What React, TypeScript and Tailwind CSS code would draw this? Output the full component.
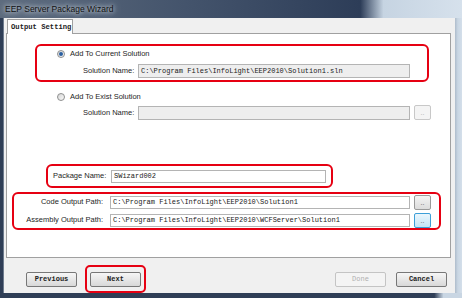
import React from "react";

const sans = "font-['Liberation_Sans',Arial,sans-serif]";
const mono = "font-['Liberation_Mono','Courier_New',monospace]";

const Radio = ({ checked }: { checked?: boolean }) => (
  <span className="w-[8px] h-[8px] rounded-full border border-[#8e8f8f] bg-gradient-to-br from-[#d6d6d6] to-[#fafafa] flex items-center justify-center shrink-0">
    {checked && <span className="w-[4px] h-[4px] rounded-full bg-[#2a5fa0]" />}
  </span>
);

const Field = ({ value, width, height = 14, disabled }: { value?: string; width: number; height?: number; disabled?: boolean }) => (
  <div
    className={`border border-[#b4b4b4] flex items-center pl-[2px] text-[7px] text-[#222] overflow-hidden whitespace-nowrap ${mono} ${
      disabled ? "bg-[#eeeeee]" : "bg-white"
    }`}
    style={{ width, height }}
  >
    {value}
  </div>
);

const Browse = ({ active, dim }: { active?: boolean; dim?: boolean }) => (
  <div
    className={`w-[17px] h-[15px] ml-[4px] rounded-[2px] border flex items-center justify-center text-[7px] leading-none ${sans} ${
      active
        ? "border-[#3c9fd8] bg-gradient-to-b from-[#eaf6fd] to-[#c4e5f6] text-[#555]"
        : dim
        ? "border-[#c8c8c8] bg-[#f4f4f4] text-[#aaa]"
        : "border-[#9a9a9a] bg-gradient-to-b from-[#f4f4f4] to-[#dcdcdc] text-[#555]"
    }`}
  >
    ..
  </div>
);

const Button = ({ label, disabled }: { label: string; disabled?: boolean }) => (
  <div
    className={`w-[51px] h-[15px] rounded-[2px] border flex items-center justify-center text-[7px] font-bold ${mono} ${
      disabled
        ? "border-[#c4c4c4] bg-[#f4f4f4] text-[#b0b0b0] font-normal"
        : "border-[#777] bg-gradient-to-b from-[#f6f6f6] to-[#d8d8d8] text-[#222]"
    }`}
  >
    {label}
  </div>
);

export default function App() {
  return (
    <div className={`w-[462px] h-[298px] flex flex-col overflow-hidden bg-[#c9d6e3] ${sans}`}>
      {/* title bar */}
      <div className="h-[18px] flex items-center pl-[5px] bg-[linear-gradient(90deg,#5d6b7d_0%,#44546c_40%,#2d3d58_78%,#c6d4e2_83%,#d6e1ec_100%)]">
        <span className="text-[8.5px] text-[#111] [text-shadow:0_0_4px_#dfe7f0,0_0_8px_#c8d3df]">
          EEP Server Package Wizard
        </span>
      </div>

      <div className="flex-1 flex">
        {/* left frame */}
        <div className="w-[4px] bg-[linear-gradient(90deg,#2f3e56_0%,#2f3e56_70%,#9aa6b4_100%)]" />

        {/* client area */}
        <div className="flex-1 flex flex-col bg-[#f0f0f0]">
          {/* tab */}
          <div className="h-[15px] flex items-end pl-[3px]">
            <div className={`w-[66px] h-[15px] -mb-[1px] relative z-10 bg-white border border-b-0 border-[#a0a0a0] flex items-center pl-[3px] text-[7.2px] font-bold text-[#222] ${mono}`}>
              Output Setting
            </div>
          </div>

          {/* panel */}
          <div className="ml-[2px] mr-[4px] h-[225px] bg-white border border-[#a0a0a0] flex flex-col">
            {/* current solution box */}
            <div className="mt-[10px] ml-[28px] w-[394px] h-[38px] border-2 border-[#e60012] rounded-[6px] flex flex-col">
              <div className="mt-[2px] h-[12px] pl-[20px] flex items-center gap-[5px] text-[7.5px] text-[#1e1e1e]">
                <Radio checked />
                <span>Add To Current Solution</span>
              </div>
              <div className="mt-[4px] pl-[46px] flex items-center">
                <span className="w-[55px] text-[7.5px] text-[#1e1e1e]">Solution Name:</span>
                <Field value="C:\Program Files\InfoLight\EEP2010\Solution1.sln" width={272} disabled />
              </div>
            </div>

            {/* exist solution */}
            <div className="mt-[9px] h-[12px] pl-[50px] flex items-center gap-[5px] text-[7.5px] text-[#1e1e1e]">
              <Radio />
              <span>Add To Exist Solution</span>
            </div>
            <div className="mt-[2px] h-[15px] pl-[76px] flex items-center">
              <span className="w-[55px] text-[7.5px] text-[#1e1e1e]">Solution Name:</span>
              <Field width={272} disabled />
              <Browse dim />
            </div>

            {/* package box */}
            <div className="mt-[44px] ml-[39px] w-[287px] h-[24px] border-2 border-[#e60012] rounded-[6px] flex items-center pl-[5px]">
              <span className="w-[58px] text-[7.5px] text-[#1e1e1e]">Package Name:</span>
              <Field value="SWizard002" width={215} height={13} />
            </div>

            {/* output paths box */}
            <div className="mt-[4px] ml-[5px] w-[429px] h-[38px] border-2 border-[#e60012] rounded-[6px] flex flex-col justify-center gap-[3px]">
              <div className="h-[15px] flex items-center">
                <span className="w-[89px] text-right text-[7.5px] text-[#1e1e1e]">Code Output Path:</span>
                <span className="w-[7px]" />
                <Field value="C:\Program Files\InfoLight\EEP2010\Solution1" width={300} height={13} />
                <Browse />
              </div>
              <div className="h-[15px] flex items-center">
                <span className="w-[89px] text-right text-[7.5px] text-[#1e1e1e]">Assembly Output Path:</span>
                <span className="w-[7px]" />
                <Field value="C:\Program Files\InfoLight\EEP2010\WCFServer\Solution1" width={300} height={13} />
                <Browse active />
              </div>
            </div>
          </div>

          {/* bottom buttons */}
          <div className="flex-1 flex items-start pt-[7px] pl-[22px] pr-[8px]">
            <div className="h-[28px] flex items-center">
              <Button label="Previous" />
            </div>
            <div className="ml-[8px] w-[61px] h-[28px] border-2 border-[#e60012] rounded-[5px] flex items-center justify-center">
              <Button label="Next" />
            </div>
            <div className="flex-1" />
            <div className="h-[28px] flex items-center gap-[10px]">
              <Button label="Done" disabled />
              <Button label="Cancel" />
            </div>
          </div>
        </div>

        {/* right frame */}
        <div className="w-[7px] bg-[linear-gradient(90deg,#aebccb_0%,#c9d6e3_40%,#d4dfea_100%)]" />
      </div>

      {/* bottom frame */}
      <div className="h-[5px] bg-[linear-gradient(90deg,#2f3e56_0%,#2f3e56_94%,#c9d6e3_96%)]" />
    </div>
  );
}
